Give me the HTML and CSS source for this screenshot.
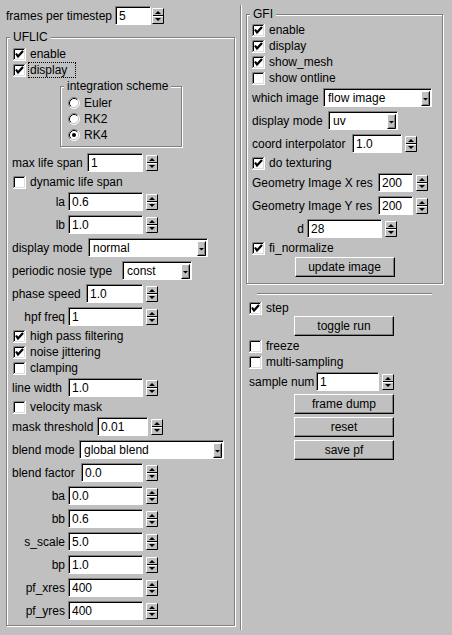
FILE: index.html
```html
<!DOCTYPE html>
<html>
<head>
<meta charset="utf-8">
<link rel="stylesheet" href="styles.css">
</head>
<body>
<svg class="defs" aria-hidden="true">
  <symbol id="spin" viewBox="0 0 12 16">
    <rect width="12" height="16" fill="#c0c0c0"/>
    <path d="M0.5 15.5V0.5H11.5" stroke="#fff" fill="none"/>
    <path d="M0.5 15.5H11.5V0.5" stroke="#000" fill="none"/>
    <path d="M1 7.5H11" stroke="#000" fill="none"/>
    <path d="M1 8.5H11" stroke="#fff" fill="none"/>
    <path d="M3 6H9L6 3Z" fill="#000"/>
    <path d="M3 10H9L6 13Z" fill="#000"/>
  </symbol>
  <symbol id="cb-off" viewBox="0 0 13 13">
    <rect width="13" height="13" fill="#fff"/>
    <path d="M0.5 12V0.5H12" stroke="#808080" fill="none"/>
    <path d="M1.5 11V1.5H11" stroke="#000" fill="none"/>
    <path d="M1.5 11.5H11.5V1.5" stroke="#dcdcdc" fill="none"/>
    <path d="M0.5 12.5H12.5V0.5" stroke="#fff" fill="none"/>
  </symbol>
  <symbol id="cb-on" viewBox="0 0 13 13">
    <rect width="13" height="13" fill="#fff"/>
    <path d="M0.5 12V0.5H12" stroke="#808080" fill="none"/>
    <path d="M1.5 11V1.5H11" stroke="#000" fill="none"/>
    <path d="M1.5 11.5H11.5V1.5" stroke="#dcdcdc" fill="none"/>
    <path d="M0.5 12.5H12.5V0.5" stroke="#fff" fill="none"/>
    <path d="M3 5.5L5 8.5L10 3" stroke="#000" stroke-width="2.2" fill="none"/>
  </symbol>
  <symbol id="rb-off" viewBox="0 0 12 12">
    <circle cx="6" cy="6" r="5" fill="#fff"/>
    <path d="M2.11 9.89A5.5 5.5 0 0 1 9.89 2.11" stroke="#808080" fill="none"/>
    <path d="M9.89 2.11A5.5 5.5 0 0 1 2.11 9.89" stroke="#fff" fill="none"/>
    <path d="M2.82 9.18A4.5 4.5 0 0 1 9.18 2.82" stroke="#000" fill="none"/>
    <path d="M9.18 2.82A4.5 4.5 0 0 1 2.82 9.18" stroke="#c0c0c0" fill="none"/>
  </symbol>
  <symbol id="rb-on" viewBox="0 0 12 12">
    <circle cx="6" cy="6" r="5" fill="#fff"/>
    <path d="M2.11 9.89A5.5 5.5 0 0 1 9.89 2.11" stroke="#808080" fill="none"/>
    <path d="M9.89 2.11A5.5 5.5 0 0 1 2.11 9.89" stroke="#fff" fill="none"/>
    <path d="M2.82 9.18A4.5 4.5 0 0 1 9.18 2.82" stroke="#000" fill="none"/>
    <path d="M9.18 2.82A4.5 4.5 0 0 1 2.82 9.18" stroke="#c0c0c0" fill="none"/>
    <circle cx="6" cy="6" r="2" fill="#000"/>
  </symbol>
  <symbol id="dd-btn" viewBox="0 0 9 15">
    <rect width="9" height="15" fill="#c0c0c0"/>
    <path d="M0.5 14.5V0.5H8.5" stroke="#fff" fill="none"/>
    <path d="M0.5 14.5H8.5V0.5" stroke="#000" fill="none"/>
    <path d="M1.5 13.5H7.5V1.5" stroke="#808080" fill="none"/>
    <path d="M2 7H7L4.5 9.5Z" fill="#000"/>
  </symbol>
</svg>

<div class="app">
  <div class="col-left">
    <div class="row top-row">
      <span class="lbl lw-109">frames per timestep</span>
      <span class="field fw-36">5</span>
      <svg class="spin tight"><use href="#spin"/></svg>
    </div>

    <div class="panel uflic">
      <span class="legend">UFLIC</span>
      <div class="check"><svg class="cb"><use href="#cb-on"/></svg><span>enable</span></div>
      <div class="check"><svg class="cb"><use href="#cb-on"/></svg><span class="focus">display</span></div>

      <div class="panel radios">
        <span class="legend">integration scheme</span>
        <div class="radio"><svg class="rb"><use href="#rb-off"/></svg><span>Euler</span></div>
        <div class="radio"><svg class="rb"><use href="#rb-off"/></svg><span>RK2</span></div>
        <div class="radio"><svg class="rb"><use href="#rb-on"/></svg><span>RK4</span></div>
      </div>

      <div class="row"><span class="lbl lw-75">max life span</span><span class="field fw-56">1</span><svg class="spin"><use href="#spin"/></svg></div>
      <div class="check"><svg class="cb"><use href="#cb-off"/></svg><span>dynamic life span</span></div>
      <div class="row"><span class="lbl lw-56 r">la</span><span class="field fw-75">0.6</span><svg class="spin"><use href="#spin"/></svg></div>
      <div class="row"><span class="lbl lw-56 r">lb</span><span class="field fw-75">1.0</span><svg class="spin"><use href="#spin"/></svg></div>
      <div class="row"><span class="lbl lw-76">display mode</span><span class="dd dw-120"><span class="dd-text">normal</span><svg class="dd-btn"><use href="#dd-btn"/></svg></span></div>
      <div class="row"><span class="lbl lw-110">periodic nosie type</span><span class="dd dw-70"><span class="dd-text">const</span><svg class="dd-btn"><use href="#dd-btn"/></svg></span></div>
      <div class="row"><span class="lbl lw-74">phase speed</span><span class="field fw-57">1.0</span><svg class="spin"><use href="#spin"/></svg></div>
      <div class="row"><span class="lbl lw-56 r">hpf freq</span><span class="field fw-75">1</span><svg class="spin"><use href="#spin"/></svg></div>
      <div class="check"><svg class="cb"><use href="#cb-on"/></svg><span>high pass filtering</span></div>
      <div class="check"><svg class="cb"><use href="#cb-on"/></svg><span>noise jittering</span></div>
      <div class="check"><svg class="cb"><use href="#cb-off"/></svg><span>clamping</span></div>
      <div class="row"><span class="lbl lw-56">line width</span><span class="field fw-75">1.0</span><svg class="spin"><use href="#spin"/></svg></div>
      <div class="check"><svg class="cb"><use href="#cb-off"/></svg><span>velocity mask</span></div>
      <div class="row"><span class="lbl lw-85">mask threshold</span><span class="field fw-51">0.01</span><svg class="spin"><use href="#spin"/></svg></div>
      <div class="row"><span class="lbl lw-67">blend mode</span><span class="dd dw-145"><span class="dd-text">global blend</span><svg class="dd-btn"><use href="#dd-btn"/></svg></span></div>
      <div class="row"><span class="lbl lw-69">blend factor</span><span class="field fw-62">0.0</span><svg class="spin"><use href="#spin"/></svg></div>
      <div class="row"><span class="lbl lw-56 r">ba</span><span class="field fw-75">0.0</span><svg class="spin"><use href="#spin"/></svg></div>
      <div class="row"><span class="lbl lw-56 r">bb</span><span class="field fw-75">0.6</span><svg class="spin"><use href="#spin"/></svg></div>
      <div class="row"><span class="lbl lw-56 r">s_scale</span><span class="field fw-75">5.0</span><svg class="spin"><use href="#spin"/></svg></div>
      <div class="row"><span class="lbl lw-56 r">bp</span><span class="field fw-75">1.0</span><svg class="spin"><use href="#spin"/></svg></div>
      <div class="row"><span class="lbl lw-56 r">pf_xres</span><span class="field fw-75">400</span><svg class="spin"><use href="#spin"/></svg></div>
      <div class="row"><span class="lbl lw-56 r">pf_yres</span><span class="field fw-75">400</span><svg class="spin"><use href="#spin"/></svg></div>
    </div>
  </div>

  <div class="vsep"></div>

  <div class="col-right">
    <div class="panel gfi">
      <span class="legend">GFI</span>
      <div class="check"><svg class="cb"><use href="#cb-on"/></svg><span>enable</span></div>
      <div class="check"><svg class="cb"><use href="#cb-on"/></svg><span>display</span></div>
      <div class="check"><svg class="cb"><use href="#cb-on"/></svg><span>show_mesh</span></div>
      <div class="check"><svg class="cb"><use href="#cb-off"/></svg><span>show ontline</span></div>
      <div class="row"><span class="lbl lw-71">which image</span><span class="dd dw-109"><span class="dd-text">flow image</span><svg class="dd-btn"><use href="#dd-btn"/></svg></span></div>
      <div class="row"><span class="lbl lw-76">display mode</span><span class="dd dw-70"><span class="dd-text">uv</span><svg class="dd-btn"><use href="#dd-btn"/></svg></span></div>
      <div class="row"><span class="lbl lw-100">coord interpolator</span><span class="field fw-50">1.0</span><svg class="spin"><use href="#spin"/></svg></div>
      <div class="check"><svg class="cb"><use href="#cb-on"/></svg><span>do texturing</span></div>
      <div class="row"><span class="lbl lw-126">Geometry Image X res</span><span class="field fw-35">200</span><svg class="spin"><use href="#spin"/></svg></div>
      <div class="row"><span class="lbl lw-126">Geometry Image Y res</span><span class="field fw-35">200</span><svg class="spin"><use href="#spin"/></svg></div>
      <div class="row"><span class="lbl lw-55 r">d</span><span class="field fw-75">28</span><svg class="spin"><use href="#spin"/></svg></div>
      <div class="check"><svg class="cb"><use href="#cb-on"/></svg><span>fi_normalize</span></div>
      <div class="btn">update image</div>
    </div>

    <div class="below">
      <div class="hsep"></div>
      <div class="check"><svg class="cb"><use href="#cb-on"/></svg><span>step</span></div>
      <div class="btn">toggle run</div>
      <div class="check"><svg class="cb"><use href="#cb-off"/></svg><span>freeze</span></div>
      <div class="check"><svg class="cb"><use href="#cb-off"/></svg><span>multi-sampling</span></div>
      <div class="row"><span class="lbl lw-67">sample num</span><span class="field fw-63">1</span><svg class="spin"><use href="#spin"/></svg></div>
      <div class="btn">frame dump</div>
      <div class="btn">reset</div>
      <div class="btn">save pf</div>
    </div>
  </div>
</div>
</body>
</html>
```
FILE: styles.css
```css
html, body {
  margin: 0;
  padding: 0;
}
body {
  background: #c0c0c0;
  color: #000;
  font-family: "Liberation Sans", Arial, sans-serif;
  font-size: 12px;
  width: 452px;
  height: 635px;
  overflow: hidden;
}
.defs {
  position: absolute;
  width: 0;
  height: 0;
  overflow: hidden;
}
.app {
  display: flex;
  align-items: flex-start;
  height: 635px;
}
.col-left {
  width: 240px;
  flex: none;
  box-sizing: border-box;
  padding-top: 6px;
}
.vsep {
  flex: none;
  width: 0;
  height: 625px;
  margin-top: 5px;
  border-left: 1px solid #808080;
  border-right: 1px solid #fff;
}
.col-right {
  flex: none;
  width: 210px;
  box-sizing: border-box;
  padding: 14px 0 0 4px;
}

/* group panels */
.panel {
  position: relative;
  box-sizing: border-box;
  border: 1px solid #808080;
  box-shadow: 1px 1px 0 #fff, inset 1px 1px 0 #fff;
}
.legend {
  position: absolute;
  left: 3px;
  top: -8px;
  padding: 0 3px;
  line-height: 14px;
  background: #c0c0c0;
  white-space: nowrap;
}
.uflic {
  width: 229px;
  margin: 12px 0 0 6px;
  padding: 8px 5px 5px 5px;
}
.radios {
  width: 122px;
  margin: 8px 0 0 48px;
  padding: 8px 0 3px 7px;
}
.gfi {
  width: 197px;
  padding: 7px 5px 6px 5px;
}

/* rows */
.row {
  display: flex;
  align-items: center;
  height: 19px;
  margin-top: 4px;
}
.top-row {
  margin: 0 0 0 6px;
}
.check, .radio {
  display: flex;
  align-items: center;
  height: 16px;
}
.check + .row,
.row + .check {
  margin-top: 2px;
}
.radios + .row {
  margin-top: 6px;
}
.check > span, .radio > span {
  margin-left: 4px;
  white-space: nowrap;
}
.cb {
  flex: none;
  width: 13px;
  height: 13px;
}
.uflic > .check .cb {
  margin-left: 1px;
}
.rb {
  flex: none;
  width: 12px;
  height: 12px;
}
.check > .focus {
  margin-left: 2px;
  box-sizing: border-box;
  width: 48px;
  height: 16px;
  padding-left: 1px;
  border: 1px dotted #000;
  display: flex;
  align-items: center;
}

/* labels */
.lbl {
  flex: none;
  white-space: nowrap;
  box-sizing: border-box;
}
.lbl.r {
  text-align: right;
  padding-right: 3px;
}
.lw-55 { width: 55px; }
.lw-56 { width: 56px; }
.lw-67 { width: 67px; }
.lw-69 { width: 69px; }
.lw-71 { width: 71px; }
.lw-74 { width: 74px; }
.lw-75 { width: 75px; }
.lw-76 { width: 76px; }
.lw-85 { width: 85px; }
.lw-100 { width: 100px; }
.lw-109 { width: 109px; }
.lw-110 { width: 110px; }
.lw-126 { width: 126px; }

/* text fields */
.field, .dd {
  flex: none;
  box-sizing: border-box;
  height: 19px;
  background: #fff;
  border: 1px solid;
  border-color: #808080 #fff #fff #808080;
  box-shadow: inset 1px 1px 0 #000;
  display: flex;
  align-items: center;
  white-space: nowrap;
  overflow: hidden;
}
.field {
  padding-left: 3px;
}
.fw-35 { width: 35px; }
.fw-36 { width: 36px; }
.fw-50 { width: 50px; }
.fw-51 { width: 51px; }
.fw-56 { width: 56px; }
.fw-57 { width: 57px; }
.fw-62 { width: 62px; }
.fw-63 { width: 63px; }
.fw-75 { width: 75px; }

/* drop-downs */
.dd {
  padding: 1px 0 0 4px;
}
.dd-text {
  flex: 1;
  overflow: hidden;
}
.dd-btn {
  flex: none;
  width: 9px;
  height: 15px;
  margin-right: 1px;
}
.dw-70 { width: 70px; }
.dw-109 { width: 109px; }
.dw-120 { width: 120px; }
.dw-145 { width: 145px; }

/* spinners */
.spin {
  flex: none;
  width: 12px;
  height: 16px;
  margin-left: 3px;
}
.spin.tight {
  margin-left: 1px;
}

/* buttons */
.btn {
  box-sizing: border-box;
  width: 100px;
  height: 20px;
  margin: 0 auto;
  border: 1px solid;
  border-color: #fff #000 #000 #fff;
  box-shadow: inset -1px -1px 0 #808080;
  display: flex;
  align-items: center;
  justify-content: center;
  white-space: nowrap;
}
.gfi .btn {
  margin-top: 1px;
}
.row + .btn,
.btn + .btn {
  margin-top: 3px;
}
.btn + .check {
  margin-top: 2px;
}

/* below GFI */
.below {
  width: 197px;
  box-sizing: border-box;
  padding: 0 4px 0 3px;
  margin-top: 9px;
}
.hsep {
  height: 0;
  margin: 0 7px 0 8px;
  border-top: 1px solid #808080;
  border-bottom: 1px solid #fff;
}
.hsep + .check {
  margin-top: 5px;
}
```
